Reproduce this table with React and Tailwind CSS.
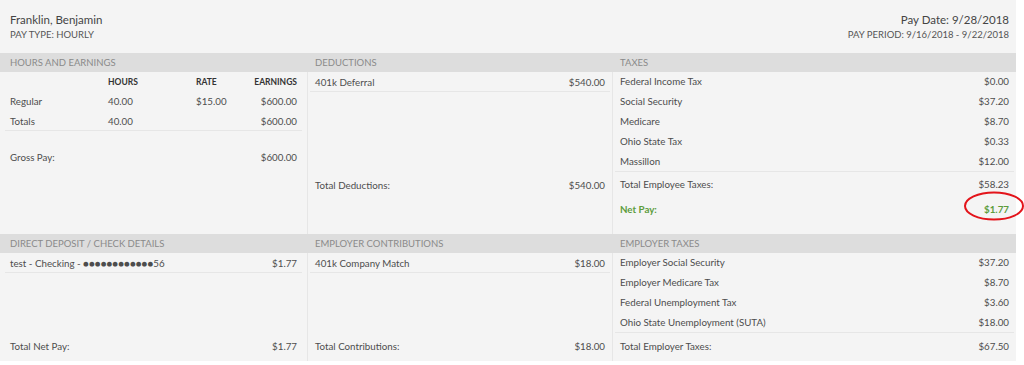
import React from 'react';

const Row = ({ label, value, className = '' }) => (
  <div className={`flex items-center justify-between h-[20px] px-[5px] ${className}`}>
    <span>{label}</span>
    <span>{value}</span>
  </div>
);

const Band = ({ title, first }) => (
  <div className={`h-[19px] bg-[#dddddd] flex items-center text-[9.5px] uppercase text-[#8a8a8a] ${first ? 'pl-[10px]' : 'pl-[8px]'}`}>
    {title}
  </div>
);

const taxes = [
  ['Federal Income Tax', '$0.00'],
  ['Social Security', '$37.20'],
  ['Medicare', '$8.70'],
  ['Ohio State Tax', '$0.33'],
  ['Massillon', '$12.00'],
];

const employerTaxes = [
  ['Employer Social Security', '$37.20'],
  ['Employer Medicare Tax', '$8.70'],
  ['Federal Unemployment Tax', '$3.60'],
  ['Ohio State Unemployment (SUTA)', '$18.00'],
];

export default function App() {
  return (
    <div className="bg-white min-h-[365px]">
      <div className="w-[1016px] bg-[#f4f4f4] font-['Lato',sans-serif] text-[#4d4d4d] text-[9.75px] leading-[18px]">
        {/* header */}
        <div className="h-[53px] flex justify-between pl-[10px] pr-[7px] pt-[12px]">
          <div>
            <div className="text-[11.5px] leading-[15px] text-[#444]">Franklin, Benjamin</div>
            <div className="text-[9.5px] leading-[15px] text-[#555]">PAY TYPE: HOURLY</div>
          </div>
          <div className="text-right">
            <div className="text-[11.5px] leading-[15px] text-[#444]">Pay Date: 9/28/2018</div>
            <div className="text-[9.5px] leading-[15px] text-[#555]">PAY PERIOD: 9/16/2018 - 9/22/2018</div>
          </div>
        </div>

        {/* top section */}
        <div className="grid grid-cols-[307px_305px_1fr]">
          <Band title="Hours and Earnings" first />
          <Band title="Deductions" />
          <Band title="Taxes" />

          <div className="h-[162px] px-[5px]">
            <div className="grid grid-cols-[98px_88px_1fr_70px] items-center h-[19px] px-[5px] text-[8.5px] font-bold text-[#333]">
              <span></span>
              <span>HOURS</span>
              <span>RATE</span>
              <span className="text-right">EARNINGS</span>
            </div>
            <div className="grid grid-cols-[98px_88px_1fr_70px] items-center h-[20px] px-[5px]">
              <span>Regular</span>
              <span>40.00</span>
              <span>$15.00</span>
              <span className="text-right">$600.00</span>
            </div>
            <div className="grid grid-cols-[98px_88px_1fr_70px] items-center h-[20px] px-[5px] border-b border-[#e6e6e6]">
              <span>Totals</span>
              <span>40.00</span>
              <span></span>
              <span className="text-right">$600.00</span>
            </div>
            <Row label="Gross Pay:" value="$600.00" className="mt-[16px]" />
          </div>

          <div className="h-[162px] px-[2px] border-l border-[#e6e6e6]">
            <Row label="401k Deferral" value="$540.00" className="h-[19px] border-b border-[#e6e6e6]" />
            <Row label="Total Deductions:" value="$540.00" className="mt-[83px]" />
          </div>

          <div className="h-[162px] px-[2px] border-l border-[#e6e6e6]">
            <div className="border-b border-[#e6e6e6] -mt-[1px]">
              {taxes.map(([l, v]) => (
                <Row key={l} label={l} value={v} className="h-[19.8px]" />
              ))}
            </div>
            <Row label="Total Employee Taxes:" value="$58.23" className="mt-[2px]" />
            <div className="flex items-center justify-between h-[20px] px-[5px] mt-[5px] font-bold text-[#5c9c3c]">
              <span>Net Pay:</span>
              <span className="relative">
                $1.77
                <svg
                  className="absolute left-[-20px] top-[-8px] overflow-visible"
                  width="60"
                  height="28"
                  viewBox="0 0 60 28"
                >
                  <ellipse cx="30" cy="14" rx="29" ry="13.5" fill="none" stroke="#e3141b" strokeWidth="2" />
                </svg>
              </span>
            </div>
          </div>
        </div>

        {/* bottom section */}
        <div className="grid grid-cols-[307px_305px_1fr]">
          <Band title="Direct Deposit / Check Details" first />
          <Band title="Employer Contributions" />
          <Band title="Employer Taxes" />

          <div className="h-[108px] px-[5px] flex flex-col justify-between pb-[5px]">
            <Row label="test - Checking - ●●●●●●●●●●●●56" value="$1.77" className="h-[19px] border-b border-[#e6e6e6]" />
            <Row label="Total Net Pay:" value="$1.77" />
          </div>

          <div className="h-[108px] px-[2px] flex flex-col justify-between pb-[5px] border-l border-[#e6e6e6]">
            <Row label="401k Company Match" value="$18.00" className="h-[19px] border-b border-[#e6e6e6]" />
            <Row label="Total Contributions:" value="$18.00" />
          </div>

          <div className="h-[108px] px-[2px] flex flex-col justify-between pb-[5px] border-l border-[#e6e6e6]">
            <div className="border-b border-[#e6e6e6] -mt-[1px]">
              {employerTaxes.map(([l, v]) => (
                <Row key={l} label={l} value={v} className="h-[19.5px]" />
              ))}
            </div>
            <Row label="Total Employer Taxes:" value="$67.50" />
          </div>
        </div>
      </div>
    </div>
  );
}
